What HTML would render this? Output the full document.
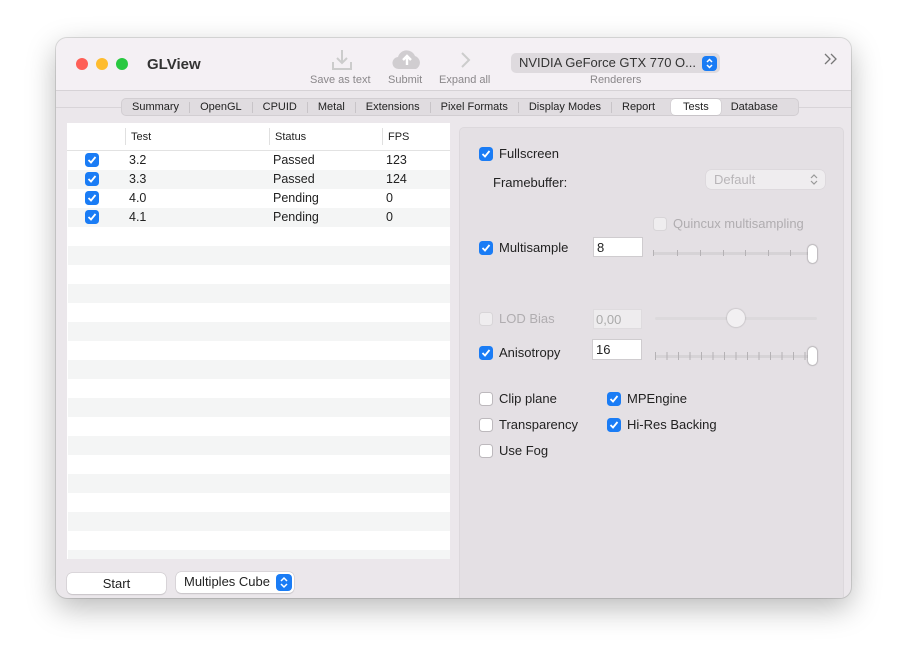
<!DOCTYPE html>
<html><head><meta charset="utf-8"><style>
*{box-sizing:border-box;margin:0;padding:0}
body{width:907px;height:672px;background:#fff;font-family:"Liberation Sans",sans-serif;font-size:12.5px;color:#222;position:relative;overflow:hidden}
.win{position:absolute;left:56px;top:38px;width:795px;height:560px;border-radius:11px;background:#ebe7eb;box-shadow:0 10px 30px rgba(0,0,0,.28),0 0 0 1px rgba(0,0,0,.12);overflow:hidden}
.tb{position:absolute;left:0;top:0;width:795px;height:53px;background:#f4f0f4;border-bottom:1px solid #d6d2d6}
.a{position:absolute}
.dot{position:absolute;top:20px;width:12px;height:12px;border-radius:50%}
.lbl{position:absolute;font-size:11px;color:#8a878a}
.tabs{position:absolute;left:65px;top:60px;height:18px;width:678px;background:#e0dce0;border:1px solid #d2ced2;border-radius:5px;display:flex;align-items:center;font-size:11px}
.tabs span{padding:0 10px;border-left:1px solid #c8c4c8;line-height:11px}
.tabs span.f{border-left:none}
.tabs span.s{background:#fff;border:none;border-radius:4px;line-height:16px;padding:0 12px;box-shadow:0 0 1px rgba(0,0,0,.3)}
.cb{position:absolute;width:14px;height:14px;border-radius:3.5px;background:#1a7cf5}
.cb svg{position:absolute;left:2px;top:2px}
.cbo{position:absolute;width:14px;height:14px;border-radius:3.5px;background:#fff;border:1px solid #bdb9bd}
.cbd{position:absolute;width:14px;height:14px;border-radius:3.5px;background:#efedef;border:1px solid #d8d5d8}
.t{position:absolute;white-space:nowrap}
.tick{position:absolute;width:1px;height:6px;background:#b5b2b5}
</style></head><body>
<div class="win">
<div class="tb">
 <div class="dot" style="left:20px;background:#fe5f57"></div>
 <div class="dot" style="left:40px;background:#febc2e"></div>
 <div class="dot" style="left:60px;background:#28c840"></div>
 <div class="t" style="left:91px;top:18px;font-size:15px;font-weight:bold;color:#333">GLView</div>
 <svg class="a" style="left:274px;top:10px" width="24" height="24" viewBox="0 0 24 24" fill="none" stroke="#ccc" stroke-width="2"><path d="M12 2v13M7 10l5 5 5-5M3 14v7h18v-7"/></svg>
 <svg class="a" style="left:335px;top:10px" width="32" height="22" viewBox="0 0 32 22"><path d="M8 21a6 6 0 0 1-1-12 9 9 0 0 1 17-1 7 7 0 0 1 1 13z" fill="#d0cdd0"/><path d="M16 17V9M12 12l4-4 4 4" stroke="#fff" stroke-width="2.4" fill="none"/></svg>
 <svg class="a" style="left:402px;top:13px" width="14" height="18" viewBox="0 0 14 18" fill="none" stroke="#ccc" stroke-width="2"><path d="M4 2l7 7-7 7"/></svg>
 <div class="lbl" style="left:254px;top:36px">Save as text</div>
 <div class="lbl" style="left:332px;top:36px">Submit</div>
 <div class="lbl" style="left:383px;top:36px">Expand all</div>
 <div class="a" style="left:455px;top:15px;width:209px;height:20px;background:#dedade;border-radius:5px"></div>
 <div class="t" style="left:463px;top:17px;font-size:13px;color:#333">NVIDIA GeForce GTX 770 O...</div>
 <div class="a" style="left:646px;top:18px;width:15px;height:15px;background:#1a7cf5;border-radius:4px"><svg width="15" height="15" viewBox="0 0 15 15" fill="none" stroke="#fff" stroke-width="1.5"><path d="M5 6l2.5-2.5L10 6M5 9l2.5 2.5L10 9"/></svg></div>
 <div class="lbl" style="left:534px;top:36px">Renderers</div>
 <svg class="a" style="left:767px;top:14px" width="16" height="14" viewBox="0 0 16 14" fill="none" stroke="#777" stroke-width="1.3"><path d="M2 2l5 5-5 5M8 2l5 5-5 5"/></svg>
</div>
<div class="a" style="left:0;top:69px;width:795px;height:1px;background:#d8d4d8"></div>
<div class="tabs"><span class="f">Summary</span><span>OpenGL</span><span>CPUID</span><span>Metal</span><span>Extensions</span><span>Pixel Formats</span><span>Display Modes</span><span>Report</span><span class="s" style="margin-left:6px">Tests</span><span style="border-left:none">Database</span></div>

<div class="a" style="left:11px;top:85px;width:383px;height:436px;background:#fff">
 <div class="a" style="left:0;top:27px;width:383px;height:1px;background:#e2e2e2"></div>
 <div class="a" style="left:58px;top:5px;width:1px;height:17px;background:#e0e0e0"></div>
 <div class="a" style="left:202px;top:5px;width:1px;height:17px;background:#e0e0e0"></div>
 <div class="a" style="left:315px;top:5px;width:1px;height:17px;background:#e0e0e0"></div>
 <div class="t" style="left:64px;top:8px;font-size:11px">Test</div>
 <div class="t" style="left:208px;top:8px;font-size:11px">Status</div>
 <div class="t" style="left:321px;top:8px;font-size:11px">FPS</div>
</div>
<div class="a" style="left:11px;top:535px;width:99px;height:21px;background:#fff;border-radius:5px;box-shadow:0 0 0 .5px #c8c4c8,0 1px 1px rgba(0,0,0,.15);text-align:center;line-height:21px;font-size:13px">Start</div>
<div class="a" style="left:120px;top:534px;width:118px;height:21px;background:#fff;border-radius:5px;box-shadow:0 0 0 .5px #c8c4c8,0 1px 1px rgba(0,0,0,.15)"></div>
<div class="t" style="left:128px;top:536px;font-size:13px">Multiples Cube</div>
<div class="a" style="left:220px;top:536px;width:16px;height:17px;background:#1a7cf5;border-radius:4px"><svg width="16" height="17" viewBox="0 0 16 17" fill="none" stroke="#fff" stroke-width="1.5"><path d="M5 7l3-3 3 3M5 10l3 3 3-3"/></svg></div>

<div class="a" style="left:403px;top:89px;width:385px;height:480px;background:#e4e0e4;border:1px solid #dcd8dc;border-radius:5px"></div>
</div>

<div style="position:absolute;left:0;top:0">
 <div class="cb" style="left:479px;top:147px"><svg width="10" height="10" viewBox="0 0 10 10" fill="none" stroke="#fff" stroke-width="1.8"><path d="M1.5 5l2.5 2.5L8.5 2"/></svg></div>
 <div class="t" style="left:499px;top:146px;font-size:13px">Fullscreen</div>
 <div class="t" style="left:493px;top:175px;font-size:13px">Framebuffer:</div>
 <div class="a" style="left:706px;top:170px;width:119px;height:19px;background:#efedef;border-radius:5px;box-shadow:0 0 0 .5px #d6d2d6"></div>
 <div class="t" style="left:714px;top:172px;font-size:13px;color:#b8b5b8">Default</div>
 <svg class="a" style="left:808px;top:172px" width="12" height="15" viewBox="0 0 12 15" fill="none" stroke="#999" stroke-width="1.2"><path d="M3 6l3-3 3 3M3 9l3 3 3-3"/></svg>
 <div class="cbd" style="left:653px;top:217px"></div>
 <div class="t" style="left:673px;top:216px;font-size:13px;color:#b0adb0">Quincux multisampling</div>
 <div class="cb" style="left:479px;top:241px"><svg width="10" height="10" viewBox="0 0 10 10" fill="none" stroke="#fff" stroke-width="1.8"><path d="M1.5 5l2.5 2.5L8.5 2"/></svg></div>
 <div class="t" style="left:499px;top:240px;font-size:13px">Multisample</div>
 <div class="a" style="left:593px;top:237px;width:50px;height:20px;background:#fff;border:1px solid #cfcccf"></div>
 <div class="t" style="left:597px;top:240px;font-size:13px">8</div>
 <div class="a" style="left:653px;top:252px;width:164px;height:3px;background:#d6d3d6;border-radius:2px"></div>
 <div class="tick" style="left:653px;top:250px"></div><div class="tick" style="left:677px;top:250px"></div><div class="tick" style="left:700px;top:250px"></div><div class="tick" style="left:723px;top:250px"></div><div class="tick" style="left:745px;top:250px"></div><div class="tick" style="left:768px;top:250px"></div><div class="tick" style="left:790px;top:250px"></div>
 <div class="a" style="left:808px;top:245px;width:9px;height:18px;background:#fff;border-radius:5px;box-shadow:0 0 1px 1px rgba(0,0,0,.18)"></div>
 <div class="cbd" style="left:479px;top:312px"></div>
 <div class="t" style="left:499px;top:311px;font-size:13px;color:#b0adb0">LOD Bias</div>
 <div class="a" style="left:593px;top:309px;width:49px;height:20px;background:#eeecee;border:1px solid #dedbde"></div>
 <div class="t" style="left:596px;top:312px;font-size:13px;color:#aaa">0,00</div>
 <div class="a" style="left:655px;top:317px;width:162px;height:3px;background:#dcd9dc;border-radius:2px"></div>
 <div class="a" style="left:727px;top:309px;width:18px;height:18px;border-radius:50%;background:#f2f0f2;box-shadow:0 0 1px 1px rgba(0,0,0,.1)"></div>
 <div class="cb" style="left:479px;top:346px"><svg width="10" height="10" viewBox="0 0 10 10" fill="none" stroke="#fff" stroke-width="1.8"><path d="M1.5 5l2.5 2.5L8.5 2"/></svg></div>
 <div class="t" style="left:499px;top:345px;font-size:13px">Anisotropy</div>
 <div class="a" style="left:592px;top:339px;width:50px;height:21px;background:#fff;border:1px solid #cfcccf"></div>
 <div class="t" style="left:596px;top:342px;font-size:13px">16</div>
 <div class="a" style="left:655px;top:355px;width:162px;height:3px;background:#d6d3d6;border-radius:2px"></div>
 <div class="a" style="left:655px;top:352px;width:155px;height:8px;background:repeating-linear-gradient(90deg,#b5b2b5 0 1px,transparent 1px 11.5px)"></div>
 <div class="a" style="left:808px;top:347px;width:9px;height:18px;background:#fff;border-radius:5px;box-shadow:0 0 1px 1px rgba(0,0,0,.18)"></div>
 <div class="cbo" style="left:479px;top:392px"></div>
 <div class="t" style="left:499px;top:391px;font-size:13px">Clip plane</div>
 <div class="cbo" style="left:479px;top:418px"></div>
 <div class="t" style="left:499px;top:417px;font-size:13px">Transparency</div>
 <div class="cbo" style="left:479px;top:444px"></div>
 <div class="t" style="left:499px;top:443px;font-size:13px">Use Fog</div>
 <div class="cb" style="left:607px;top:392px"><svg width="10" height="10" viewBox="0 0 10 10" fill="none" stroke="#fff" stroke-width="1.8"><path d="M1.5 5l2.5 2.5L8.5 2"/></svg></div>
 <div class="t" style="left:627px;top:391px;font-size:13px">MPEngine</div>
 <div class="cb" style="left:607px;top:418px"><svg width="10" height="10" viewBox="0 0 10 10" fill="none" stroke="#fff" stroke-width="1.8"><path d="M1.5 5l2.5 2.5L8.5 2"/></svg></div>
 <div class="t" style="left:627px;top:417px;font-size:13px">Hi-Res Backing</div>
</div>

<div style="position:absolute;left:68px;top:151px;width:382px;height:408px;overflow:hidden;background:repeating-linear-gradient(#fff 0 19px,#f4f5f5 19px 38px)">
 <div class="cb" style="left:17px;top:2px"><svg width="10" height="10" viewBox="0 0 10 10" fill="none" stroke="#fff" stroke-width="1.8"><path d="M1.5 5l2.5 2.5L8.5 2"/></svg></div>
 <div class="t" style="left:61px;top:2px">3.2</div><div class="t" style="left:205px;top:2px">Passed</div><div class="t" style="left:318px;top:2px">123</div>
 <div class="cb" style="left:17px;top:21px"><svg width="10" height="10" viewBox="0 0 10 10" fill="none" stroke="#fff" stroke-width="1.8"><path d="M1.5 5l2.5 2.5L8.5 2"/></svg></div>
 <div class="t" style="left:61px;top:21px">3.3</div><div class="t" style="left:205px;top:21px">Passed</div><div class="t" style="left:318px;top:21px">124</div>
 <div class="cb" style="left:17px;top:40px"><svg width="10" height="10" viewBox="0 0 10 10" fill="none" stroke="#fff" stroke-width="1.8"><path d="M1.5 5l2.5 2.5L8.5 2"/></svg></div>
 <div class="t" style="left:61px;top:40px">4.0</div><div class="t" style="left:205px;top:40px">Pending</div><div class="t" style="left:318px;top:40px">0</div>
 <div class="cb" style="left:17px;top:59px"><svg width="10" height="10" viewBox="0 0 10 10" fill="none" stroke="#fff" stroke-width="1.8"><path d="M1.5 5l2.5 2.5L8.5 2"/></svg></div>
 <div class="t" style="left:61px;top:59px">4.1</div><div class="t" style="left:205px;top:59px">Pending</div><div class="t" style="left:318px;top:59px">0</div>
</div>
</body></html>
